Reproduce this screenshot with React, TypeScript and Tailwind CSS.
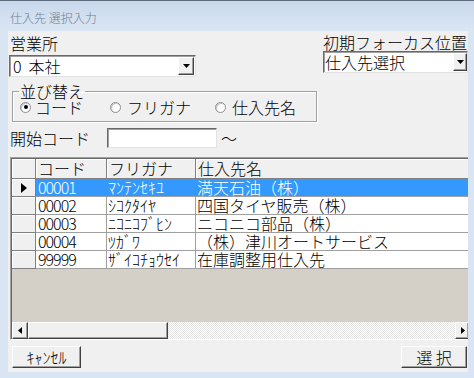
import React from 'react'

const rows = [
  { code: '00001', kana: 'ﾏﾝﾃﾝｾｷﾕ', name: '満天石油（株）' },
  { code: '00002', kana: 'ｼｺｸﾀｲﾔ', name: '四国タイヤ販売（株）' },
  { code: '00003', kana: 'ﾆｺﾆｺﾌﾞﾋﾝ', name: 'ニコニコ部品（株）' },
  { code: '00004', kana: 'ﾂｶﾞﾜ', name: '（株）津川オートサービス' },
  { code: '99999', kana: 'ｻﾞｲｺﾁｮｳｾｲ', name: '在庫調整用仕入先' },
]

// classic raised 3d box
const raised =
  'bg-[#f0f0f0] border border-t-white border-l-white border-r-[#404040] border-b-[#404040] shadow-[inset_-1px_-1px_0_#a0a0a0]'
const sunken =
  'bg-white border border-t-[#696969] border-l-[#696969] border-r-[#e3e3e3] border-b-[#e3e3e3] shadow-[inset_1px_1px_0_#a0a0a0]'

function DropArrow({ className = '' }: { className?: string }) {
  return (
    <div className={`flex items-center justify-center ${raised} ${className}`}>
      <svg width="7" height="4" viewBox="0 0 7 4">
        <path d="M0 0h7L3.5 4z" fill="#000" />
      </svg>
    </div>
  )
}

function Radio({ checked = false }: { checked?: boolean }) {
  return (
    <span className="w-[11px] h-[11px] rounded-full border border-[#8d8d8d] bg-white flex items-center justify-center shrink-0 shadow-[inset_1px_1px_0_#c8c8c8]">
      {checked && <span className="w-[4px] h-[4px] rounded-full bg-black" />}
    </span>
  )
}

export default function App() {
  return (
    <div className="w-[474px] h-[378px] bg-[#dae5f3] border-t border-[#5d6b7c] flex flex-col font-['Noto_Sans_CJK_JP','Noto_Sans_CJK_SC',sans-serif] font-light text-black">
      {/* Title bar */}
      <div className="h-[30px] shrink-0 bg-gradient-to-b from-[#c9d8ec] to-[#dbe6f4] flex items-center pl-[10px] pt-[4px] text-[12px] text-[#6e7f95]">
        仕入先 選択入力
      </div>

      {/* Client area */}
      <div className="ml-[8px] w-[460px] h-[341px] bg-[#f0f0f0] overflow-hidden flex flex-col text-[16px]">
        {/* Top row */}
        <div className="flex justify-between items-start pt-[3px]">
          <div className="ml-[1px] flex flex-col">
            <div className="pl-[1px] leading-[18px]">営業所</div>
            <div className={`mt-[3px] w-[187px] h-[22px] flex items-center justify-between ${sunken}`}>
              <span className="pl-[3px] leading-[18px]">
                0<span className="ml-[7px]">本社</span>
              </span>
              <DropArrow className="w-[16px] h-[18px] mr-px" />
            </div>
          </div>
          <div className="flex flex-col items-end">
            <div className="leading-[17px] pr-px">初期フォーカス位置</div>
            <div className={`w-[145px] h-[22px] flex items-center justify-between ${sunken}`}>
              <span className="pl-[1px] leading-[18px]">仕入先選択</span>
              <DropArrow className="w-[14px] h-[18px]" />
            </div>
          </div>
        </div>

        {/* Sort group */}
        <fieldset className="mt-[6px] ml-[4px] w-[305px] border border-[#a0a0a0] shadow-[inset_1px_1px_0_#fff,1px_1px_0_#fff] pb-[6px]">
          <legend className="ml-[6px] px-px leading-[16px]">並び替え</legend>
          <div className="flex items-center h-[16px] pl-[7px]">
            <div className="w-[90px] flex items-center gap-[4px]">
              <Radio checked />
              <span className="leading-[16px]">コード</span>
            </div>
            <div className="w-[105px] flex items-center gap-[6px]">
              <Radio />
              <span className="leading-[16px]">フリガナ</span>
            </div>
            <div className="flex items-center gap-[6px]">
              <Radio />
              <span className="leading-[16px]">仕入先名</span>
            </div>
          </div>
        </fieldset>

        {/* Start code */}
        <div className="mt-[6px] flex items-center h-[20px]">
          <div className="pl-[2px] w-[99px] leading-[18px]">開始コード</div>
          <div className={`w-[110px] h-[20px] ${sunken}`} />
          <span className="ml-[4px] leading-[18px]">～</span>
        </div>

        {/* Grid */}
        <div className="mt-[9px] ml-[2px] border-l border-t border-[#a0a0a0] border-b border-b-white">
          <div className="border-l border-t border-[#696969] bg-[#d4d0c8] flex flex-col">
            <div className="h-[20px] flex bg-[#f0f0f0] border-b border-[#808080]">
              <div className="w-[24px] border-r border-[#808080] shadow-[inset_1px_1px_0_#fff]" />
              <div className="w-[71px] border-r border-[#808080] pl-[2px] leading-[19px] shadow-[inset_1px_1px_0_#fff]">コード</div>
              <div className="w-[89px] border-r border-[#808080] pl-[2px] leading-[19px] shadow-[inset_1px_1px_0_#fff]">フリガナ</div>
              <div className="flex-1 pl-[2px] leading-[19px] shadow-[inset_1px_1px_0_#fff]">仕入先名</div>
            </div>
            {rows.map((r, i) => {
              const sel = i === 0
              return (
                <div key={r.code} className="h-[18px] flex">
                  <div className="w-[24px] bg-[#f0f0f0] border-r border-b border-[#808080] shadow-[inset_1px_1px_0_#fff] flex items-center justify-center">
                    {sel && (
                      <svg width="6" height="10" viewBox="0 0 6 10">
                        <path d="M0 0l6 5-6 5z" fill="#000" />
                      </svg>
                    )}
                  </div>
                  <div
                    className={`w-[71px] border-r border-b pl-[2px] leading-[17px] tracking-[-1px] ${
                      sel ? 'bg-[#3399ff] text-white border-r-[#3399ff] border-b-[#a0a0a0]' : 'bg-white border-[#a0a0a0]'
                    }`}
                  >
                    {r.code}
                  </div>
                  <div
                    className={`w-[89px] border-r border-b pl-px leading-[17px] whitespace-nowrap ${
                      sel ? 'bg-[#3399ff] text-white border-r-[#3399ff] border-b-[#a0a0a0]' : 'bg-white border-[#a0a0a0]'
                    }`}
                  >
                    {r.kana}
                  </div>
                  <div
                    className={`flex-1 border-b pl-px leading-[17px] whitespace-nowrap ${
                      sel ? 'bg-[#3399ff] text-white border-[#a0a0a0]' : 'bg-white border-[#a0a0a0]'
                    }`}
                  >
                    {r.name}
                  </div>
                </div>
              )
            })}
            <div className="h-[53px]" />
            {/* Horizontal scrollbar */}
            <div className="h-[17px] flex">
              <div className={`w-[16px] flex items-center justify-center ${raised}`}>
                <svg width="4" height="7" viewBox="0 0 4 7">
                  <path d="M4 0v7L0 3.5z" fill="#000" />
                </svg>
              </div>
              <div className={`w-[140px] ${raised}`} />
              <div className="flex-1 bg-[image:repeating-conic-gradient(#ffffff_0%_25%,#e4e4e4_0%_50%)] bg-size-[2px_2px]" />
              <div className={`w-[13px] flex items-center pl-[5px] border-r-0 ${raised}`}>
                <svg width="4" height="7" viewBox="0 0 4 7">
                  <path d="M0 0v7l4-3.5z" fill="#000" />
                </svg>
              </div>
            </div>
          </div>
        </div>

        {/* Buttons */}
        <div className="mt-[6px] flex justify-between">
          <button className={`ml-[4px] w-[69px] h-[22px] leading-[18px] ${raised}`}>ｷｬﾝｾﾙ</button>
          <button className={`mr-px w-[66px] h-[22px] leading-[18px] ${raised}`}>選 択</button>
        </div>
      </div>
    </div>
  )
}
